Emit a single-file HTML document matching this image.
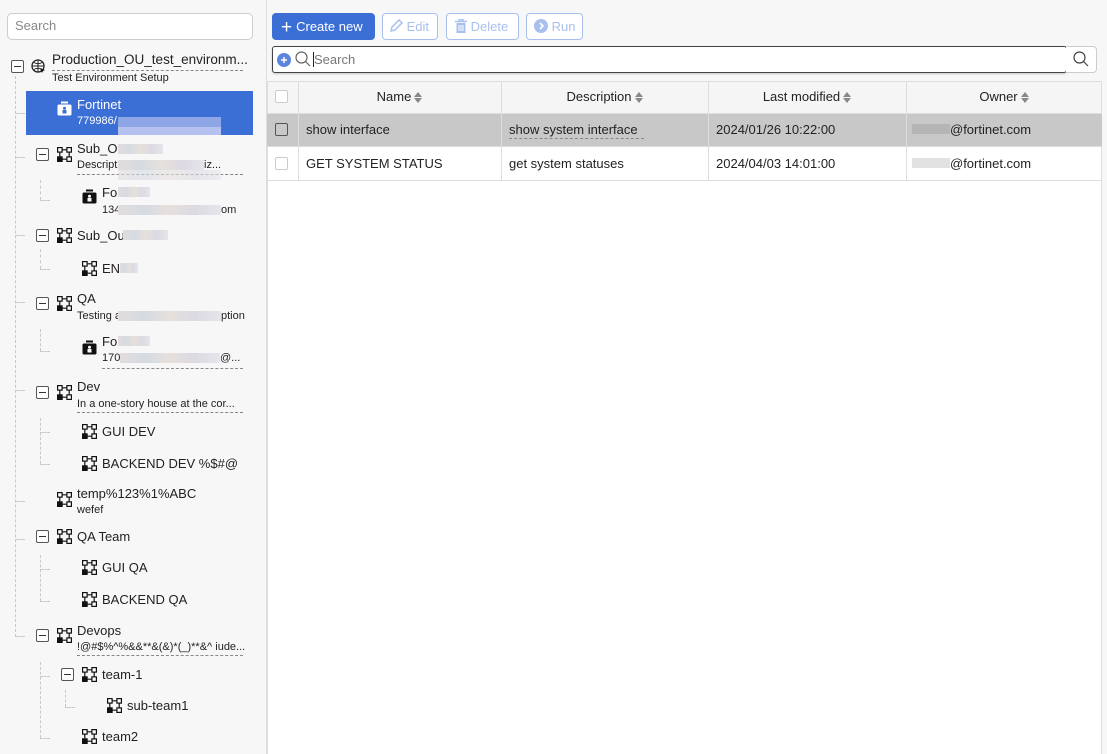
<!DOCTYPE html>
<html><head><meta charset="utf-8">
<style>
*{box-sizing:border-box;margin:0;padding:0}
body{width:1107px;height:754px;overflow:hidden;background:#f7f7f7;font-family:"Liberation Sans",sans-serif;color:#222;position:relative}
.a{position:absolute}
.t{position:absolute;font-size:13px;white-space:nowrap;color:#222}
.s{position:absolute;font-size:11px;white-space:nowrap;color:#222}
.tg{position:absolute;width:13px;height:13px;border:1px solid #555;border-radius:2px;background:#fff}
.tg:after{content:"";position:absolute;left:2px;right:2px;top:5px;height:1px;background:#333}
.vl{position:absolute;border-left:1px dashed #c8c8c8;width:0}
.hl{position:absolute;border-top:1px dashed #c8c8c8;height:0}
.ul{position:absolute;border-top:1px dashed #888;height:0}
.bl{position:absolute;background:linear-gradient(90deg,#e2dcdc,#d5dbe2,#e6e0dc,#dcd9e2,#e4e6ea);height:10px}
.ic{position:absolute}
.btn{position:absolute;top:13px;height:27px;border:1px solid #a9c0ee;border-radius:4px;color:#a9c0ee;font-size:13px;line-height:25px;background:#fff}
.th{position:absolute;top:81px;height:33px;font-size:13px;line-height:31px;text-align:center;color:#222}
.arr{display:inline-block;vertical-align:middle;margin-left:3px;width:8px;height:12px;position:relative}
.arr:before{content:"";position:absolute;left:0;top:0;border:4px solid transparent;border-bottom:5px solid #888;border-top:0}
.arr:after{content:"";position:absolute;left:0;top:6px;border:4px solid transparent;border-top:5px solid #888;border-bottom:0}
.cb{position:absolute;width:13px;height:13px;border:1px solid #ccc;border-radius:2px;background:#fff}
</style></head><body>
<svg width="0" height="0" style="position:absolute">
<defs>
<symbol id="org" viewBox="0 0 15 15"><g fill="#fff" stroke="#111" stroke-width="1.2"><rect x="0.6" y="0.6" width="4.5" height="4.5"/><rect x="9.9" y="0.6" width="4.5" height="4.5"/><rect x="9.9" y="9.9" width="4.5" height="4.5"/><rect x="0.6" y="9.9" width="4.5" height="4.5" fill="#111"/><path d="M5 2.8H10M2.8 5V10M12.2 5V10M5 12.2H10" fill="none"/></g></symbol>
<symbol id="dev" viewBox="0 0 15 15"><rect x="4" y="0.5" width="7" height="2" fill="#111"/><rect x="0.5" y="3.5" width="14" height="11" rx="1.5" fill="#111"/><circle cx="7.5" cy="7.3" r="1.5" fill="#fff"/><rect x="5.5" y="9" width="4" height="3.5" fill="#fff"/></symbol>
</defs></svg>

<!-- left panel -->
<div class="a" style="left:266px;top:0;width:1px;height:754px;background:#ddd"></div>
<div class="a" style="left:7px;top:13px;width:246px;height:27px;border:1px solid #ccc;border-radius:5px;background:#fff"></div>
<div class="t" style="left:15px;top:18px;color:#888">Search</div>

<!-- tree lines -->
<div class="vl" style="left:15px;top:76px;height:561px"></div>
<div class="hl" style="left:15px;top:113px;width:10px"></div>
<div class="hl" style="left:15px;top:157px;width:10px"></div>
<div class="hl" style="left:15px;top:235px;width:10px"></div>
<div class="hl" style="left:15px;top:302px;width:10px"></div>
<div class="hl" style="left:15px;top:390px;width:10px"></div>
<div class="hl" style="left:15px;top:501px;width:10px"></div>
<div class="hl" style="left:15px;top:539px;width:10px"></div>
<div class="hl" style="left:15px;top:636px;width:10px"></div>
<div class="vl" style="left:40px;top:180px;height:20px"></div><div class="hl" style="left:40px;top:200px;width:10px"></div>
<div class="vl" style="left:40px;top:249px;height:20px"></div><div class="hl" style="left:40px;top:269px;width:10px"></div>
<div class="vl" style="left:40px;top:329px;height:22px"></div><div class="hl" style="left:40px;top:351px;width:10px"></div>
<div class="vl" style="left:40px;top:418px;height:46px"></div><div class="hl" style="left:40px;top:432px;width:10px"></div><div class="hl" style="left:40px;top:464px;width:10px"></div>
<div class="vl" style="left:40px;top:555px;height:46px"></div><div class="hl" style="left:40px;top:569px;width:10px"></div><div class="hl" style="left:40px;top:601px;width:10px"></div>
<div class="vl" style="left:40px;top:662px;height:76px"></div><div class="hl" style="left:40px;top:676px;width:10px"></div><div class="hl" style="left:40px;top:738px;width:10px"></div>
<div class="vl" style="left:65px;top:690px;height:17px"></div><div class="hl" style="left:65px;top:707px;width:10px"></div>

<!-- Production -->
<div class="tg" style="left:11px;top:60px"></div>
<svg class="ic" style="left:31px;top:59px" width="15" height="15" viewBox="0 0 15 15"><circle cx="7" cy="7" r="6" fill="#fff" stroke="#222" stroke-width="1.3"/><path d="M1 7H13M7 1V13M3 3.5Q7 6 11 3.5M3 10.5Q7 8 11 10.5" stroke="#222" fill="none" stroke-width="1"/><path d="M9 9l5 2-2 1-1 2z" fill="#111"/></svg>
<div class="t" style="left:52px;top:52px;font-size:13.5px">Production_OU_test_environm...</div>
<div class="ul" style="left:52px;top:70px;width:191px"></div>
<div class="s" style="left:52px;top:72px">Test Environment Setup</div>

<!-- Fortinet selected -->
<div class="a" style="left:26px;top:91px;width:227px;height:44px;background:#3b6fd6"></div>
<svg class="ic" style="left:57px;top:101px" width="15" height="15" viewBox="0 0 15 15"><rect x="4" y="0.5" width="7" height="2" fill="#fff"/><rect x="0.5" y="3.5" width="14" height="11" rx="1.5" fill="#fff"/><circle cx="7.5" cy="7.3" r="1.5" fill="#3b6fd6"/><rect x="5.5" y="9" width="4" height="3.5" fill="#3b6fd6"/></svg>
<div class="t" style="left:77px;top:97px;color:#fff">Fortinet</div>
<div class="s" style="left:77px;top:115px;color:#fff">779986/</div>
<div class="a" style="left:118px;top:117px;width:103px;height:10px;background:#8fa6e6"></div>
<div class="a" style="left:118px;top:127px;width:103px;height:8px;background:#b5c1ee"></div>

<!-- Sub_OU 1 -->
<div class="tg" style="left:36px;top:148px"></div>
<svg class="ic" style="left:57px;top:147px" width="15" height="15"><use href="#org"/></svg>
<div class="t" style="left:77px;top:141px">Sub_Ou</div>
<div class="bl" style="left:118px;top:144px;width:45px"></div>
<div class="s" style="left:77px;top:159px">Descript</div>
<div class="bl" style="left:118px;top:160px;width:86px"></div>
<div class="s" style="left:204px;top:159px">iz...</div>
<div class="ul" style="left:77px;top:174px;width:166px"></div>
<div class="bl" style="left:118px;top:170px;width:103px;opacity:.6"></div>

<svg class="ic" style="left:82px;top:189px" width="15" height="15"><use href="#dev"/></svg>
<div class="t" style="left:102px;top:185px">Fo</div>
<div class="bl" style="left:118px;top:187px;width:32px"></div>
<div class="s" style="left:102px;top:204px">134</div>
<div class="bl" style="left:118px;top:205px;width:103px"></div>
<div class="s" style="left:221px;top:204px">om</div>

<!-- Sub_OU 2 -->
<div class="tg" style="left:36px;top:229px"></div>
<svg class="ic" style="left:57px;top:228px" width="15" height="15"><use href="#org"/></svg>
<div class="t" style="left:77px;top:228px">Sub_Ou</div>
<div class="bl" style="left:123px;top:230px;width:45px"></div>
<svg class="ic" style="left:82px;top:261px" width="15" height="15"><use href="#org"/></svg>
<div class="t" style="left:102px;top:261px">EN</div>
<div class="bl" style="left:120px;top:263px;width:18px"></div>

<!-- QA -->
<div class="tg" style="left:36px;top:297px"></div>
<svg class="ic" style="left:57px;top:296px" width="15" height="15"><use href="#org"/></svg>
<div class="t" style="left:77px;top:291px">QA</div>
<div class="s" style="left:77px;top:310px">Testing a</div>
<div class="bl" style="left:118px;top:311px;width:103px"></div>
<div class="s" style="left:221px;top:310px">ption</div>
<svg class="ic" style="left:82px;top:340px" width="15" height="15"><use href="#dev"/></svg>
<div class="t" style="left:102px;top:334px">Fo</div>
<div class="bl" style="left:118px;top:336px;width:32px"></div>
<div class="s" style="left:102px;top:352px">170</div>
<div class="bl" style="left:120px;top:353px;width:100px"></div>
<div class="s" style="left:220px;top:352px">@...</div>
<div class="ul" style="left:102px;top:368px;width:141px"></div>

<!-- Dev -->
<div class="tg" style="left:36px;top:386px"></div>
<svg class="ic" style="left:57px;top:385px" width="15" height="15"><use href="#org"/></svg>
<div class="t" style="left:77px;top:379px">Dev</div>
<div class="s" style="left:77px;top:398px">In a one-story house at the cor...</div>
<div class="ul" style="left:77px;top:412px;width:166px"></div>
<svg class="ic" style="left:82px;top:424px" width="15" height="15"><use href="#org"/></svg>
<div class="t" style="left:102px;top:424px">GUI DEV</div>
<svg class="ic" style="left:82px;top:456px" width="15" height="15"><use href="#org"/></svg>
<div class="t" style="left:102px;top:456px">BACKEND DEV %$#@</div>

<!-- temp -->
<svg class="ic" style="left:57px;top:492px" width="15" height="15"><use href="#org"/></svg>
<div class="t" style="left:77px;top:486px">temp%123%1%ABC</div>
<div class="s" style="left:77px;top:504px">wefef</div>

<!-- QA Team -->
<div class="tg" style="left:36px;top:530px"></div>
<svg class="ic" style="left:57px;top:529px" width="15" height="15"><use href="#org"/></svg>
<div class="t" style="left:77px;top:529px">QA Team</div>
<svg class="ic" style="left:82px;top:560px" width="15" height="15"><use href="#org"/></svg>
<div class="t" style="left:102px;top:560px">GUI QA</div>
<svg class="ic" style="left:82px;top:592px" width="15" height="15"><use href="#org"/></svg>
<div class="t" style="left:102px;top:592px">BACKEND QA</div>

<!-- Devops -->
<div class="tg" style="left:36px;top:629px"></div>
<svg class="ic" style="left:57px;top:628px" width="15" height="15"><use href="#org"/></svg>
<div class="t" style="left:77px;top:623px">Devops</div>
<div class="s" style="left:77px;top:641px">!@#$%^%&amp;&amp;**&amp;(&amp;)*(_)**&amp;^ iude...</div>
<div class="ul" style="left:77px;top:655px;width:166px"></div>
<div class="tg" style="left:61px;top:668px"></div>
<svg class="ic" style="left:82px;top:667px" width="15" height="15"><use href="#org"/></svg>
<div class="t" style="left:102px;top:667px">team-1</div>
<svg class="ic" style="left:107px;top:698px" width="15" height="15"><use href="#org"/></svg>
<div class="t" style="left:127px;top:698px">sub-team1</div>
<svg class="ic" style="left:82px;top:729px" width="15" height="15"><use href="#org"/></svg>
<div class="t" style="left:102px;top:729px">team2</div>

<!-- right side -->
<div class="a" style="left:272px;top:13px;width:103px;height:27px;background:#3b6fd6;border-radius:4px;color:#fff;font-size:13px;line-height:27px;padding-left:9px"><span style="font-size:19px;vertical-align:-2px;margin-right:4px">+</span>Create new</div>
<div class="btn" style="left:382px;width:56px;padding-left:6px"><svg width="14" height="14" viewBox="0 0 14 14" style="vertical-align:-2px"><path d="M2 12l1-4 7-7 3 3-7 7z" fill="none" stroke="#a9c0ee" stroke-width="1.5"/></svg> Edit</div>
<div class="btn" style="left:446px;width:73px;padding-left:8px"><svg width="12" height="14" viewBox="0 0 12 14" style="vertical-align:-2px"><path d="M0 2.5H12M4 2V0.5H8V2" stroke="#a9c0ee" stroke-width="1.4" fill="none"/><path d="M1.5 4H10.5V14H1.5z" fill="#a9c0ee"/><path d="M4 6V12M6 6V12M8 6V12" stroke="#fff"/></svg> Delete</div>
<div class="btn" style="left:526px;width:57px;padding-left:7px"><svg width="14" height="14" viewBox="0 0 14 14" style="vertical-align:-2px"><circle cx="7" cy="7" r="7" fill="#a9c0ee"/><path d="M6 4l3 3-3 3" stroke="#fff" stroke-width="1.6" fill="none"/></svg> Run</div>

<div class="a" style="left:272px;top:46px;width:795px;height:27px;border:1px solid #444;border-radius:3px;background:#fff;box-shadow:0 1px 2px rgba(0,0,0,.2)"></div>
<svg class="ic" style="left:277px;top:53px" width="14" height="14"><circle cx="7" cy="7" r="7" fill="#5b85e0"/><path d="M7 4V10M4 7H10" stroke="#fff" stroke-width="1.5"/></svg>
<svg class="ic" style="left:295px;top:51px" width="16" height="16"><circle cx="6.5" cy="6.5" r="5.5" fill="none" stroke="#666" stroke-width="1.2"/><path d="M10.5 10.5L15 15" stroke="#666" stroke-width="1.2"/></svg>
<div class="a" style="left:313px;top:52px;width:1px;height:15px;background:#222"></div>
<div class="t" style="left:314px;top:52px;color:#777">Search</div>
<div class="a" style="left:1066px;top:46px;width:31px;height:27px;border:1px solid #ccc;border-left:none;border-radius:0 4px 4px 0;background:#fff"></div>
<svg class="ic" style="left:1073px;top:51px" width="16" height="16"><circle cx="6.5" cy="6.5" r="5.5" fill="none" stroke="#444" stroke-width="1.2"/><path d="M10.5 10.5L15 15" stroke="#444" stroke-width="1.2"/></svg>

<!-- table -->
<div class="a" style="left:267px;top:81px;width:835px;height:673px;border:1px solid #ddd;border-bottom:none;background:#fff"></div>
<div class="a" style="left:267px;top:81px;width:835px;height:33px;background:#f5f5f5;border:1px solid #ddd"></div>
<div class="a" style="left:267px;top:114px;width:835px;height:33px;background:#c8c8c8;border-bottom:1px solid #ddd"></div>
<div class="a" style="left:267px;top:147px;width:835px;height:34px;border-bottom:1px solid #ddd"></div>
<div class="a" style="left:298px;top:81px;width:1px;height:100px;background:#ddd"></div>
<div class="a" style="left:501px;top:81px;width:1px;height:100px;background:#ddd"></div>
<div class="a" style="left:708px;top:81px;width:1px;height:100px;background:#ddd"></div>
<div class="a" style="left:906px;top:81px;width:1px;height:100px;background:#ddd"></div>
<div class="cb" style="left:275px;top:90px"></div>
<div class="cb" style="left:275px;top:123px;border-color:#555;background:#c8c8c8"></div>
<div class="cb" style="left:275px;top:157px"></div>
<div class="th" style="left:298px;width:203px">Name<span class="arr"></span></div>
<div class="th" style="left:501px;width:207px">Description<span class="arr"></span></div>
<div class="th" style="left:708px;width:198px">Last modified<span class="arr"></span></div>
<div class="th" style="left:906px;width:196px">Owner<span class="arr"></span></div>

<div class="t" style="left:306px;top:122px">show interface</div>
<div class="t" style="left:509px;top:122px">show system interface</div>
<div class="ul" style="left:509px;top:138px;width:135px;border-color:#888"></div>
<div class="t" style="left:716px;top:122px">2024/01/26 10:22:00</div>
<div class="a" style="left:912px;top:124px;width:38px;height:10px;background:#b5b5b5"></div>
<div class="t" style="left:950px;top:122px">@fortinet.com</div>

<div class="t" style="left:306px;top:156px">GET SYSTEM STATUS</div>
<div class="t" style="left:509px;top:156px">get system statuses</div>
<div class="t" style="left:716px;top:156px">2024/04/03 14:01:00</div>
<div class="a" style="left:912px;top:158px;width:38px;height:10px;background:#e2e2e2"></div>
<div class="t" style="left:950px;top:156px">@fortinet.com</div>
</body></html>
